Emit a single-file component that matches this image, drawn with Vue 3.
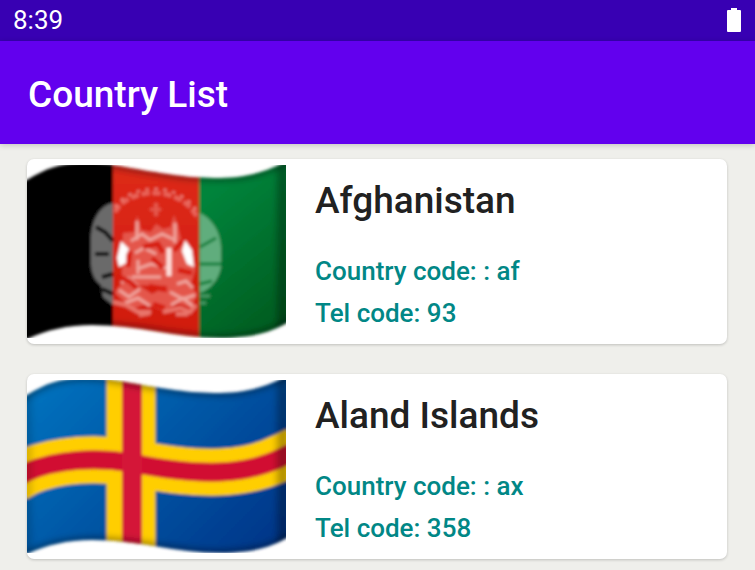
<template>
  <div class="screen">
    <div class="status-bar">
      <span>8:39</span>
      <svg class="battery" viewBox="0 0 14 24" aria-label="Battery full">
        <path d="M4 0h6v2h3a1 1 0 0 1 1 1v20a1 1 0 0 1-1 1H1a1 1 0 0 1-1-1V3a1 1 0 0 1 1-1h3z" fill="#fff" />
      </svg>
    </div>

    <header class="app-bar">
      <h1>Country List</h1>
    </header>

    <main class="list">
      <article v-for="country in countries" :key="country.code" class="card">
        <svg class="flag" viewBox="0 0 259 173" role="img" :aria-label="country.name">
          <defs>
            <clipPath :id="`wave-${country.code}`">
              <path :d="wave" />
            </clipPath>
            <filter :id="`soft-${country.code}`" x="-10%" y="-10%" width="120%" height="120%">
              <feGaussianBlur stdDeviation="1.7" />
            </filter>
            <filter :id="`fold-${country.code}`" x="-10%" y="-10%" width="120%" height="120%">
              <feGaussianBlur stdDeviation="3" />
            </filter>
            <linearGradient id="green" x1="0" y1="0" x2="0.4" y2="1">
              <stop offset="0.2" stop-color="#00843b" />
              <stop offset="1" stop-color="#005c20" />
            </linearGradient>
            <linearGradient id="red" x1="0" y1="0" x2="0" y2="1">
              <stop offset="0" stop-color="#de2b1b" />
              <stop offset="1" stop-color="#cf1809" />
            </linearGradient>
            <linearGradient id="blue" gradientUnits="userSpaceOnUse" x1="20" y1="0" x2="210" y2="190">
              <stop offset="0" stop-color="#0071bd" />
              <stop offset="0.5" stop-color="#0055a4" />
              <stop offset="1" stop-color="#00378a" />
            </linearGradient>
          </defs>

          <g :filter="`url(#soft-${country.code})`">
            <g :clip-path="`url(#wave-${country.code})`">
              <g v-if="country.code === 'af'">
                <rect x="-10" y="-10" width="96" height="200" fill="#000" />
                <rect x="86" y="-10" width="87" height="200" fill="url(#red)" />
                <rect x="172" y="-10" width="100" height="200" fill="url(#green)" />

                <!-- wreath -->
                <path d="M86 38C74 40 65 53 64 72v28c1 12 6 17 10 20l2 12 10 8z" fill="#6b6b6b" />
                <path d="M69 62l9 5 8 9M68 89h14M75 112l11-3M75 124l11 5" stroke="#050505" stroke-width="4" fill="none" />
                <path d="M173 48c12 6 20 18 21 34v20c-2 12-10 22-21 26z" fill="#61ad7d" />
                <path d="M173 82l16-9M173 99h21M173 119l12-3" stroke="#087e3a" stroke-width="3" fill="none" />
                <path d="M173 131h10M173 138h6" stroke="#4b9b68" stroke-width="3" />
                <path d="M88 47C101 22 155 19 171 54" stroke="#e9665b" stroke-width="4" stroke-dasharray="8 3" fill="none" />
                <path d="M88 42C105 18 153 16 171 48" stroke="#ee9187" stroke-width="2" stroke-dasharray="3 6" fill="none" />

                <!-- mosque -->
                <g fill="#e4574c">
                  <path d="M96 68l12-1 2-17 4 15 10 2 5-8 7 5 8-2 3-12 4 12 4 17 8 6 5 20-4 13-15 3-42-1-12-10z" />
                  <path d="M88 128c5-12 18-15 25-7l12 8 15-8c12-8 22-3 30 8l-6 14-13-5-14 8-18-7-14 5z" />
                  <path d="M127 38h4v13h-4zM123 43h11v3h-11z" />
                </g>
                <g fill="none" stroke="#f0a49d" stroke-width="3">
                  <path d="M104 76l11-7 8 6 12-6 13 6M108 88l9-5 12 6M110 104l14-5 20 5M105 112h29M92 125l10 7 11-8M98 138l13-5 12 8M143 127l13 7 12-4M144 140l12-7 12 10" />
                  <path d="M110 56v19M148 58v20M111 95v14" />
                  <path d="M94 118l8-5 9 8M150 119l9-3 7 7" />
                </g>
                <g fill="none" stroke="#d71e11" stroke-width="5">
                  <path d="M116 82l15-3 5 9M125 93l11 10M90 112l12 4 8 7M122 121l18 4M151 105l14 3M103 86l-2 16M155 76l-8 10M126 139l12 4" />
                </g>
                <path d="M94 76l8 8-3 6v8l-7 4-2-9z" fill="#fff" />
                <path d="M158 75l7 10 2 17-7-3-5-13z" fill="#fff" />
                <path d="M142 83v28" stroke="#ffe0dc" stroke-width="5" />
                <g fill="none" stroke="#e9756b" stroke-width="4">
                  <path d="M86 137l13 3 12 7h13M136 147l17-4 10 4 6-7M112 150l11-2M149 149h12" />
                </g>
              </g>

              <g v-else>
                <rect x="-10" y="-10" width="280" height="200" fill="url(#blue)" />
                <path :d="cross" fill="none" stroke="#ffce00" stroke-width="47" />
                <path d="M104-10V190" stroke="#ffce00" stroke-width="49" />
                <path :d="cross" fill="none" stroke="#d10f31" stroke-width="19" />
                <path d="M105-10V190" stroke="#d41338" stroke-width="20" />
              </g>

              <g :filter="`url(#fold-${country.code})`" fill="none" stroke="#000">
                <path :d="wave" stroke-width="6" opacity="0.4" />
                <path d="M256-10V190" stroke-width="12" opacity="0.3" />
                <path d="M0-10V190" stroke-width="10" opacity="0.15" />
              </g>
            </g>
          </g>
        </svg>

        <div class="details">
          <h2>{{ country.name }}</h2>
          <p>Country code: : {{ country.code }}</p>
          <p>Tel code: {{ country.tel }}</p>
        </div>
      </article>
    </main>
  </div>
</template>

<script setup>
const countries = [
  { name: 'Afghanistan', code: 'af', tel: '93' },
  { name: 'Aland Islands', code: 'ax', tel: '358' }
];

const wave = 'M-12 22L0 15C20 3 32 -1 52 -2C72 -3 88 0 104 3C140 9 160 13 193 13C220 13 240 6 258 -3L270 -8V152L258 159C240 169 220 173 193 173C150 173 110 160 65 160C40 160 20 165 0 174L-12 180Z';
const cross = 'M-12 99L0 92C30 79 70 77 105 83C140 90 165 93 193 92C220 91 240 85 258 76L270 70';
</script>

<style>
body {
  margin: 0;
  background: #efefeb;
}
</style>

<style scoped>
.screen {
  font-family: Roboto, "Liberation Sans", sans-serif;
}

.status-bar {
  display: flex;
  align-items: center;
  justify-content: space-between;
  height: 41px;
  padding: 0 14px 2px 13px;
  box-sizing: border-box;
  background: #3800b3;
  color: #fff;
  font-size: 26px;
}

.battery {
  width: 14px;
  height: 24px;
}

.app-bar {
  position: relative;
  display: flex;
  align-items: center;
  height: 103px;
  padding: 5px 28px 0;
  box-sizing: border-box;
  background: #6200ee;
  color: #fff;
  box-shadow: 0 1px 6px rgba(0, 0, 0, 0.2);
}

h1,
h2 {
  margin: 0;
  font-size: 37px;
  font-weight: 500;
  line-height: 44px;
}

.list {
  display: flex;
  flex-direction: column;
  gap: 30px;
  padding: 15px 28px 11px 27px;
}

.card {
  display: flex;
  align-items: center;
  height: 185px;
  overflow: hidden;
  border-radius: 7px;
  background: #fff;
  box-shadow: 0 1px 3px rgba(0, 0, 0, 0.2);
}

.flag {
  flex: none;
  width: 259px;
  height: 173px;
}

.details {
  padding: 9px 0 0 29px;
}

h2 {
  margin-bottom: 27px;
  color: #212121;
}

p {
  margin: 0;
  color: #018786;
  font-size: 26px;
  font-weight: 500;
  line-height: 42px;
}
</style>
